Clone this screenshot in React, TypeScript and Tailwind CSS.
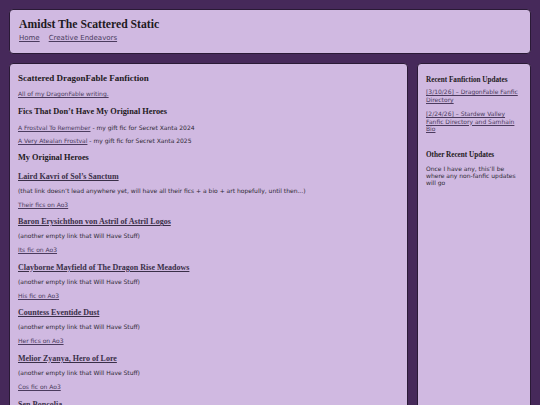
const serif = "font-['Liberation_Serif','Times_New_Roman',serif]";

type Hero = { name: string; note: string; link: string };

const heroes: Hero[] = [
  { name: "Laird Kavri of Sol’s Sanctum", note: "(that link doesn’t lead anywhere yet, will have all their fics + a bio + art hopefully, until then...)", link: "Their fics on Ao3" },
  { name: "Baron Erysichthon von Astril of Astril Logos", note: "(another empty link that Will Have Stuff)", link: "Its fic on Ao3" },
  { name: "Clayborne Mayfield of The Dragon Rise Meadows", note: "(another empty link that Will Have Stuff)", link: "His fic on Ao3" },
  { name: "Countess Eventide Dust", note: "(another empty link that Will Have Stuff)", link: "Her fics on Ao3" },
  { name: "Melior Zyanya, Hero of Lore", note: "(another empty link that Will Have Stuff)", link: "Cos fic on Ao3" },
  { name: "Sen Boncolia", note: "(another empty link that Will Have Stuff)", link: "Their fic on Ao3" },
];

function A({ children }: { children: React.ReactNode }) {
  return <a href="#" className="text-[#4b3b5e] underline">{children}</a>;
}

export default function App() {
  return (
    <div className="h-[405px] overflow-hidden bg-[#46295a] p-[9px] font-['DejaVu_Sans','Verdana',sans-serif] text-[#2f2a35]">
      <header className="rounded-[4px] border border-[#2a1a36] bg-[#d0b9e1] px-[9px] pt-[8px] pb-[10px]">
        <h1 className={`${serif} text-[11.7px] leading-[14px] font-bold text-[#1e1a22]`}>Amidst The Scattered Static</h1>
        <nav className="mt-[1px] flex gap-[9px] text-[7px] leading-[10px]">
          <A>Home</A>
          <A>Creative Endeavors</A>
        </nav>
      </header>

      <div className="mt-[9px] flex gap-[9px]">
        <main className="h-[400px] flex-1 rounded-[4px] border border-[#2a1a36] bg-[#d0b9e1] px-[8px] pt-[8px]">
          <h2 className={`${serif} text-[9px] leading-[12px] font-bold text-[#1e1a22]`}>Scattered DragonFable Fanfiction</h2>
          <p className="mt-[6px] text-[6px] leading-[8px]"><A>All of my DragonFable writing.</A></p>
          <h3 className={`${serif} mt-[9px] text-[8.3px] leading-[10px] font-bold text-[#1e1a22]`}>Fics That Don’t Have My Original Heroes</h3>
          <p className="mt-[7px] text-[6px] leading-[8px]"><A>A Frostval To Remember</A> - my gift fic for Secret Xanta 2024</p>
          <p className="mt-[5px] text-[6px] leading-[8px]"><A>A Very Atealan Frostval</A> - my gift fic for Secret Xanta 2025</p>
          <h3 className={`${serif} mt-[8px] text-[8.3px] leading-[10px] font-bold text-[#1e1a22]`}>My Original Heroes</h3>
          {heroes.map((h) => (
            <section key={h.name} className="mt-[8.6px]">
              <h4 className={`${serif} text-[8px] leading-[10px] font-bold text-[#3a2f48] underline`}>{h.name}</h4>
              <p className="mt-[5px] text-[6px] leading-[8px]">{h.note}</p>
              <p className="mt-[6px] text-[6px] leading-[8px]"><A>{h.link}</A></p>
            </section>
          ))}
        </main>

        <aside className="h-[400px] w-[114px] rounded-[4px] border border-[#2a1a36] bg-[#d0b9e1] px-[8px] pt-[11px]">
          <h3 className={`${serif} text-[7.2px] leading-[10px] font-bold text-[#1e1a22]`}>Recent Fanfiction Updates</h3>
          <p className="mt-[3px] text-[6px] leading-[8px]"><A>[3/10/26] – DragonFable Fanfic Directory</A></p>
          <p className="mt-[6px] text-[6px] leading-[7.5px]"><A>[2/24/26] – Stardew Valley Fanfic Directory and Samhain Bio</A></p>
          <h3 className={`${serif} mt-[17.5px] text-[7.2px] leading-[10px] font-bold text-[#1e1a22]`}>Other Recent Updates</h3>
          <p className="mt-[4.5px] text-[6px] leading-[7px]">Once I have any, this’ll be where any non-fanfic updates will go</p>
        </aside>
      </div>
    </div>
  );
}
